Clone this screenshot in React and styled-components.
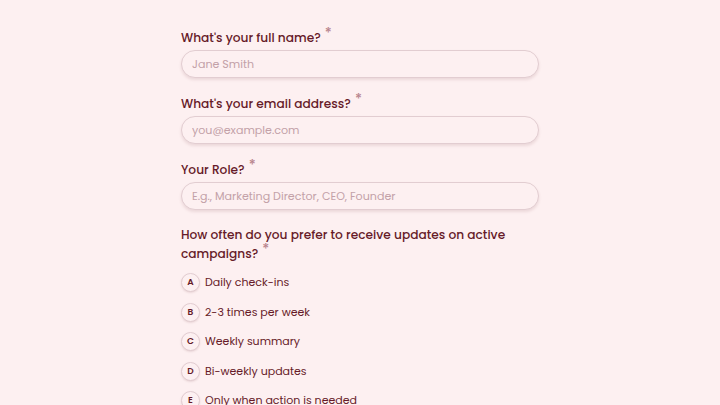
import React from "react";
import styled, { createGlobalStyle } from "styled-components";

const Global = createGlobalStyle`
  html, body { margin: 0; padding: 0; background: #fdf0f1; }
  body { font-family: "Poppins", "Inter", "Noto Sans", sans-serif; }
  * { box-sizing: border-box; }
`;

const Page = styled.div`
  width: 720px;
  height: 405px;
  overflow: hidden;
  background: #fdf0f1;
  display: flex;
  justify-content: center;
`;

const Form = styled.form`
  width: 358px;
  padding-top: 27px;
  display: flex;
  flex-direction: column;
`;

const Field = styled.div`
  display: flex;
  flex-direction: column;
  margin-bottom: ${(p) => p.$mb || 0}px;
`;

const Label = styled.label`
  font-size: 12.2px;
  line-height: 18px;
  font-weight: 500;
  color: #661a28;
  padding-top: 1px;
  margin-bottom: 3px;
`;

const Star = styled.span`
  color: #b8848d;
  font-size: 14px;
  margin-left: 4px;
  position: relative;
  top: -4px;
`;

const Input = styled.input`
  height: 28px;
  width: 100%;
  border: 1px solid #e2cdd1;
  border-radius: 999px;
  background: #fdf0f1;
  padding: 0 10px;
  font-family: inherit;
  font-size: 11.1px;
  color: #661a28;
  box-shadow: 0 2px 3px rgba(120, 60, 70, 0.13);
  outline: none;
  &::placeholder { color: #c3a1a8; }
`;

const Options = styled.div`
  display: flex;
  flex-direction: column;
  gap: 10.6px;
  margin-top: 7px;
`;

const Option = styled.label`
  display: flex;
  align-items: center;
  gap: 5px;
  font-size: 11px;
  line-height: 19px;
  color: #661a28;
  cursor: pointer;
`;

const Key = styled.span`
  width: 19px;
  height: 19px;
  border-radius: 50%;
  border: 1px solid #e2cdd1;
  background: #fdf0f1;
  box-shadow: 0 1px 2px rgba(120, 60, 70, 0.15);
  display: flex;
  align-items: center;
  justify-content: center;
  font-size: 9px;
  font-weight: 600;
  color: #661a28;
  flex-shrink: 0;
`;

const fields = [
  { label: "What's your full name?", ph: "Jane Smith" },
  { label: "What's your email address?", ph: "you@example.com" },
  { label: "Your Role?", ph: "E.g., Marketing Director, CEO, Founder" },
];

const opts = [
  ["A", "Daily check-ins"],
  ["B", "2-3 times per week"],
  ["C", "Weekly summary"],
  ["D", "Bi-weekly updates"],
  ["E", "Only when action is needed"],
];

export default function App() {
  return (
    <>
      <Global />
      <Page>
        <Form onSubmit={(e) => e.preventDefault()}>
          {fields.map((f) => (
            <Field key={f.label} $mb={15}>
              <Label>
                {f.label}
                <Star>*</Star>
              </Label>
              <Input placeholder={f.ph} />
            </Field>
          ))}
          <Field>
            <Label>
              How often do you prefer to receive updates on active campaigns?
              <Star>*</Star>
            </Label>
            <Options>
              {opts.map(([k, t]) => (
                <Option key={k}>
                  <Key>{k}</Key>
                  {t}
                </Option>
              ))}
            </Options>
          </Field>
        </Form>
      </Page>
    </>
  );
}
